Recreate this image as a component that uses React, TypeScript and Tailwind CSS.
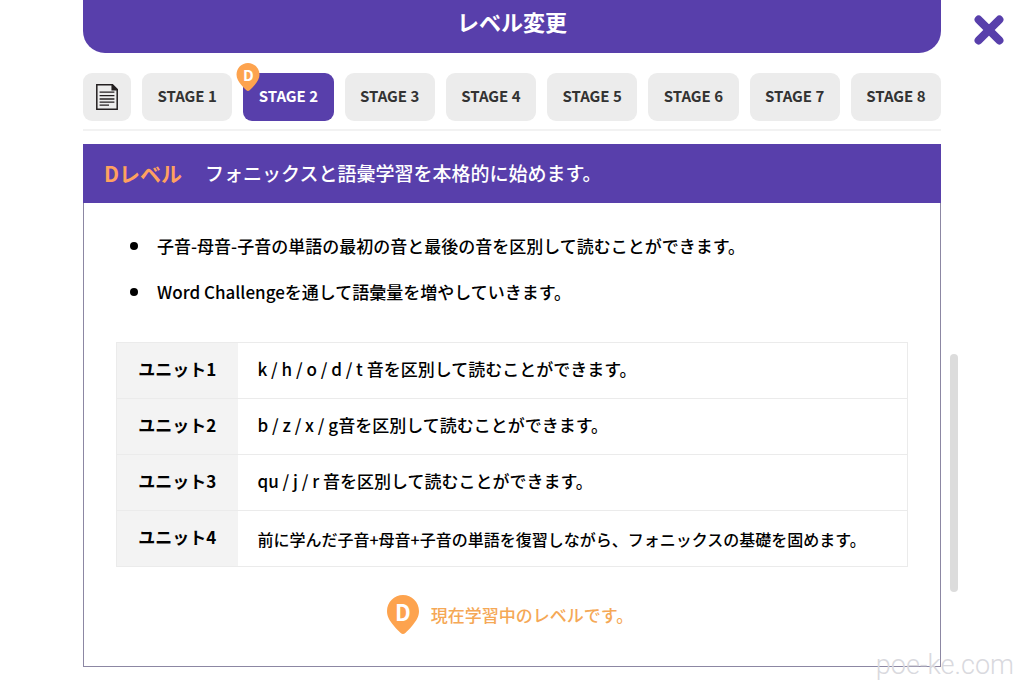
const STAGES = [1, 2, 3, 4, 5, 6, 7, 8];
const CURRENT_STAGE = 2;

const GOALS = [
  '子音-母音-子音の単語の最初の音と最後の音を区別して読むことができます。',
  'Word Challengeを通して語彙量を増やしていきます。',
];

const UNITS = [
  { name: 'ユニット1', text: 'k / h / o / d / t 音を区別して読むことができます。' },
  { name: 'ユニット2', text: 'b / z / x / g音を区別して読むことができます。' },
  { name: 'ユニット3', text: 'qu / j / r 音を区別して読むことができます。' },
  {
    name: 'ユニット4',
    text: '前に学んだ子音+母音+子音の単語を復習しながら、フォニックスの基礎を固めます。',
    small: true,
  },
];

function PinShape({ className }: { className: string }) {
  return (
    <svg className={className} viewBox="0 0 32 39" fill="#fda34e" aria-hidden="true">
      <path d="M16 0C7.2 0 0 7.2 0 16c0 5.6 2.6 9.6 6.4 14.2 2.4 2.9 5 5.6 7.3 7.8 1.3 1.3 3.3 1.3 4.6 0 2.3-2.2 4.9-4.9 7.3-7.8C29.4 25.6 32 21.6 32 16 32 7.2 24.8 0 16 0z" />
    </svg>
  );
}

function DocumentIcon() {
  return (
    <svg className="h-[26px] w-[22px]" viewBox="0 0 22 26" fill="none" stroke="#231f20" strokeWidth="1.5" aria-hidden="true">
      <path d="M0.8 0.8H16.4L21.2 5.6V25.2H0.8z" />
      <path d="M16.2 0.8V5.8H21.2z" fill="#231f20" />
      <path d="M3.6 8.2H18.4M3.6 11.6H18.4M3.6 15H18.4M3.6 18.2H18.4M3.6 21.2H13" strokeWidth="1.3" />
    </svg>
  );
}

function CloseIcon() {
  return (
    <svg className="h-[30px] w-[30px]" viewBox="0 0 30 30" stroke="#583fab" strokeWidth="8" strokeLinecap="round" aria-hidden="true">
      <path d="M4.6 4.6L25.4 25.4M25.4 4.6L4.6 25.4" />
    </svg>
  );
}

function StageTabs() {
  return (
    <nav className="mt-5 flex gap-[11px] border-b-2 border-[#f2f2f2] pb-2">
      <button type="button" aria-label="一覧" className="flex h-12 w-12 items-center justify-center rounded-[9px] bg-[#ececec]">
        <DocumentIcon />
      </button>
      {STAGES.map((stage) => {
        const active = stage === CURRENT_STAGE;
        return (
          <button
            key={stage}
            type="button"
            aria-current={active ? 'true' : undefined}
            className={`relative h-12 flex-1 rounded-[9px] pb-px text-[15px] font-bold whitespace-nowrap ${
              active ? 'bg-[#583fab] text-white' : 'bg-[#ececec] text-[#333]'
            }`}
          >
            STAGE {stage}
            {active && (
              <span className="absolute -top-[10px] -left-[7px] flex h-7 w-6 justify-center text-[15px] leading-[23px] font-bold text-white">
                <PinShape className="absolute inset-0 h-7 w-6" />
                <span className="relative">D</span>
              </span>
            )}
          </button>
        );
      })}
    </nav>
  );
}

function LevelPanel() {
  return (
    <section className="mt-[13px] border border-[#8c87a3]">
      <h2 className="-mx-px -mt-px flex h-[59px] items-center gap-[23px] bg-[#583fab] px-[21px] text-[19px] font-medium text-white">
        <span className="text-[21px] font-bold text-[#ffa15f]">Dレベル</span>
        フォニックスと語彙学習を本格的に始めます。
      </h2>

      <div className="px-8 pt-[31px] pb-8">
        <ul className="space-y-[22px] pl-[14px] text-[17px] leading-6 font-medium">
          {GOALS.map((goal) => (
            <li key={goal} className="flex items-center gap-[19px]">
              <span className="h-2 w-2 rounded-full bg-black" />
              {goal}
            </li>
          ))}
        </ul>

        <table className="mt-[38px] w-full border-collapse text-[17px] leading-6 font-medium">
          <tbody>
            {UNITS.map((unit) => (
              <tr key={unit.name} className="h-14 border border-[#ebebeb]">
                <th scope="row" className="w-[121px] bg-[#f3f3f3] pb-1 font-bold">
                  {unit.name}
                </th>
                <td className={unit.small ? 'pl-5 text-[16px]' : 'pb-1 pl-5'}>{unit.text}</td>
              </tr>
            ))}
          </tbody>
        </table>

        <p className="mt-7 mr-1 flex items-center justify-center gap-3 text-[17px] font-medium text-[#f5a856]">
          <span className="relative flex h-[39px] w-8 justify-center text-[22px] leading-8 font-bold text-white">
            <PinShape className="absolute inset-0 h-[39px] w-8" />
            <span className="relative">D</span>
          </span>
          現在学習中のレベルです。
        </p>
      </div>
    </section>
  );
}

export default function App() {
  return (
    <div className="relative grid min-h-screen grid-cols-[83px_1fr_83px] bg-white font-['Noto_Sans_CJK_JP',sans-serif] text-black">
      <main className="col-start-2">
        <header className="flex h-[53px] items-center justify-center rounded-b-[22px] bg-[#583fab] pb-[10px]">
          <h1 className="text-[22px] font-bold text-white">レベル変更</h1>
        </header>
        <StageTabs />
        <LevelPanel />
      </main>

      <aside className="flex flex-col">
        <button type="button" aria-label="閉じる" className="mt-[15px] mr-5 self-end">
          <CloseIcon />
        </button>
        {/* scroll thumb */}
        <div className="mt-[309px] ml-[9px] h-[238px] w-2 rounded-full bg-[#dcdcdc]" />
      </aside>

      <span className="absolute right-[10px] bottom-1 font-[Roboto] text-[27px] leading-[30px] font-light text-[#d9d9de]">
        poe-ke.com
      </span>
    </div>
  );
}
